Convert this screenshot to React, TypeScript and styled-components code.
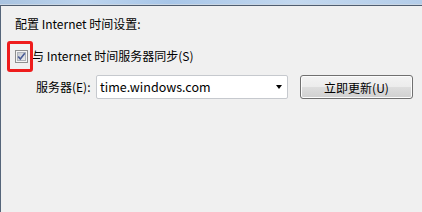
import React from 'react'
import styled, { createGlobalStyle } from 'styled-components'

const GlobalStyle = createGlobalStyle`
  html, body {
    margin: 0;
    padding: 0;
    background: #f0f0f0;
  }
  #root {
    width: 422px;
    height: 212px;
    overflow: hidden;
  }
`

const Frame = styled.div`
  display: flex;
  flex-direction: column;
  width: 422px;
  height: 212px;
  font-family: 'Noto Sans CJK SC', 'Noto Sans', sans-serif;
  font-size: 12px;
  color: #000;
`

const GlassStrip = styled.div`
  height: 4px;
  background: linear-gradient(90deg, #a9c3e0 0%, #bcd4ee 20%, #a8c6e8 40%, #c3d8ef 70%, #b4cde9 100%);
  border-bottom: 1px solid #c9d6e4;
`

const Panel = styled.div`
  flex: 1;
  display: flex;
  flex-direction: column;
  padding: 10px 0 0 14px;
  background: #f0f0f0;
  border-top: 1px solid #4f5d70;
  border-left: 1px solid #55657a;
`

const Title = styled.div`
  line-height: 16px;
  height: 16px;
`

const CheckRow = styled.label`
  display: flex;
  align-items: center;
  gap: 4px;
  margin-top: 16px;
  height: 16px;
  line-height: 16px;
`

const CheckWrap = styled.span`
  position: relative;
  display: inline-flex;
  width: 13px;
  height: 13px;
`

const Highlight = styled.span`
  position: absolute;
  left: -8px;
  top: -9px;
  width: 20px;
  height: 25px;
  border: 3px solid #ee1c1c;
  border-radius: 3px;
`

const ServerRow = styled.div`
  display: flex;
  align-items: center;
  margin-top: 10px;
  padding-left: 21px;
  height: 25px;
`

const FieldLabel = styled.span`
  width: 60px;
  line-height: 16px;
`

const Combo = styled.div`
  display: flex;
  align-items: center;
  justify-content: space-between;
  box-sizing: border-box;
  width: 192px;
  height: 24px;
  padding: 0 4px 0 3px;
  background: #fff;
  border: 1px solid #c6c9ce;
  border-radius: 2px;
  font-size: 12.5px;
`

const Arrow = styled.span`
  width: 0;
  height: 0;
  margin-right: 1px;
  border-left: 3.5px solid transparent;
  border-right: 3.5px solid transparent;
  border-top: 4px solid #000;
`

const Button = styled.button`
  box-sizing: border-box;
  width: 113px;
  height: 24px;
  margin-left: 12px;
  margin-top: 1px;
  padding: 0;
  font-family: inherit;
  font-size: 12px;
  color: #000;
  border: 1px solid #707070;
  border-radius: 3px;
  background: linear-gradient(180deg, #f3f3f3 0%, #ececec 48%, #dddddd 52%, #d0d0d0 100%);
  box-shadow: inset 0 0 0 1px #fcfcfc;
`

const CheckBox: React.FC = () => (
  <svg width="13" height="13" viewBox="0 0 13 13">
    <defs>
      <linearGradient id="cbfill" x1="0" y1="0" x2="1" y2="1">
        <stop offset="0" stopColor="#c4c8cf" />
        <stop offset="1" stopColor="#eeeeee" />
      </linearGradient>
    </defs>
    <rect x="0.5" y="0.5" width="12" height="12" fill="#f4f4f4" stroke="#8e8f8f" />
    <rect x="2.5" y="2.5" width="8" height="8" fill="url(#cbfill)" stroke="#aeb3bb" />
    <path d="M3.2 6.4 L5.3 9 L9.8 3.2" fill="none" stroke="#4a5d96" strokeWidth="1.6" />
  </svg>
)

const App: React.FC = () => (
  <>
    <GlobalStyle />
    <Frame>
      <GlassStrip />
      <Panel>
        <Title>配置 Internet 时间设置:</Title>
        <CheckRow>
          <CheckWrap>
            <CheckBox />
            <Highlight />
          </CheckWrap>
          与 Internet 时间服务器同步(S)
        </CheckRow>
        <ServerRow>
          <FieldLabel>服务器(E):</FieldLabel>
          <Combo>
            <span>time.windows.com</span>
            <Arrow />
          </Combo>
          <Button>立即更新(U)</Button>
        </ServerRow>
      </Panel>
    </Frame>
  </>
)

export default App
